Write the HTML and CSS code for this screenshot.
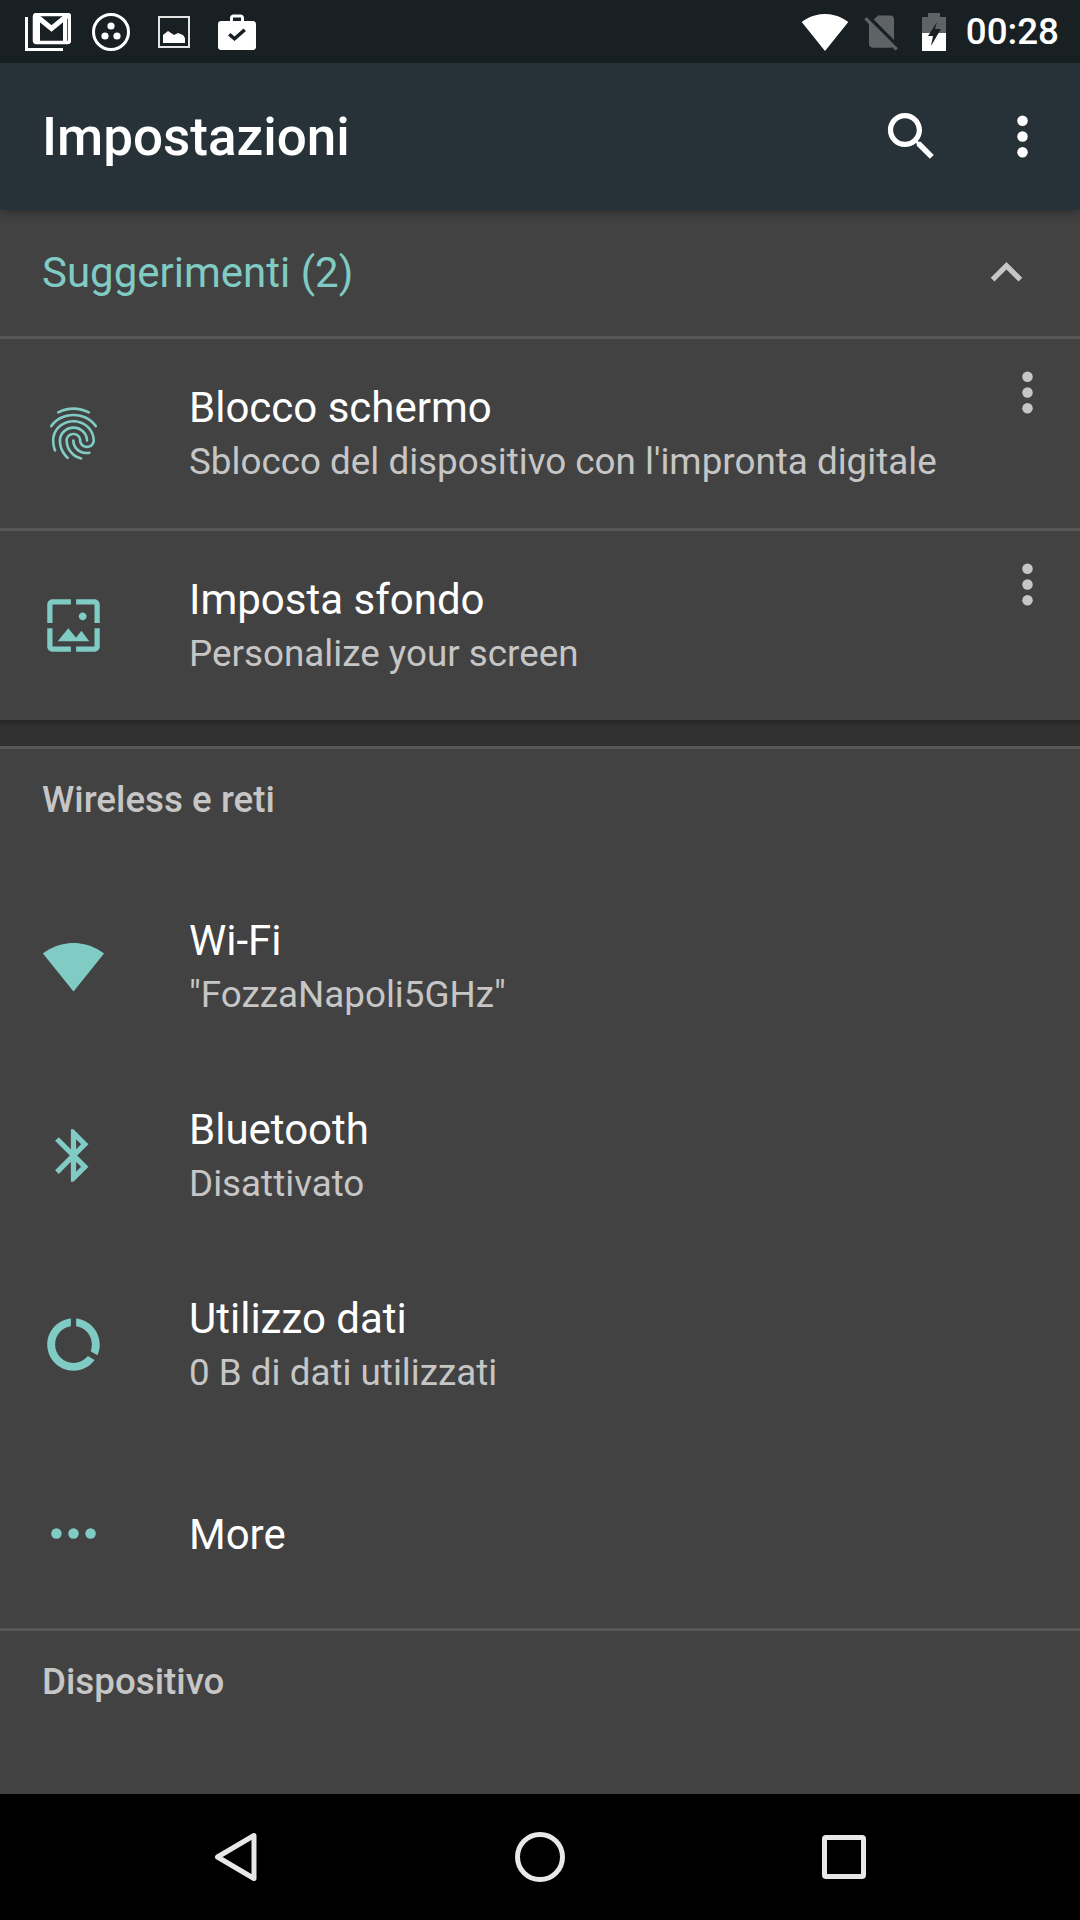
FILE: index.html
```html
<!DOCTYPE html>
<html lang="it">
<head>
    <meta charset="UTF-8">
    <meta name="viewport" content="width=device-width, initial-scale=1.0">
    <title>Impostazioni</title>
    <link rel="stylesheet" href="styles.css">
</head>
<body>

<div id="screen">
    <div class="status-bar">
        <div class="status-left">
            <span class="status-cell">
                <svg class="ico-gmail" viewBox="0 0 46 38">
                    <path class="line" d="M1.500 4v32.500H38" stroke-width="3"/>
                    <rect class="line" x="9.500" y="1.500" width="35" height="28" rx="2" stroke-width="3.500"/>
                    <path class="line" d="M10 2l16.500 13.500L43 2" stroke-width="5"/>
                    <path class="line" d="M13 4v24M40 4v24" stroke-width="4"/>
                </svg>
            </span>
            <span class="status-cell">
                <svg class="ico-circle" viewBox="0 0 38 38">
                    <circle class="line" cx="19" cy="19" r="17.500" stroke-width="3"/>
                    <circle class="solid" cx="19" cy="13" r="3.600"/>
                    <circle class="solid" cx="13" cy="23" r="3.600"/>
                    <circle class="solid" cx="25" cy="23" r="3.600"/>
                </svg>
            </span>
            <span class="status-cell">
                <svg class="ico-image" viewBox="0 0 32 32">
                    <rect class="line soft" x="1" y="1" width="30" height="30" stroke-width="2"/>
                    <path class="solid" d="M5 27v-8l5-4 6 4 4-2 5 2 2 3v5z"/>
                </svg>
            </span>
            <span class="status-cell">
                <svg class="ico-case" viewBox="0 0 38 36">
                    <path class="solid" fill-rule="evenodd" d="M12 7V4c0-2 1.500-3.500 3.500-3.500h7C24.500.5 26 2 26 4v3h9c1.700 0 3 1.300 3 3v23c0 1.700-1.300 3-3 3H3c-1.700 0-3-1.300-3-3V10c0-1.700 1.300-3 3-3zm3 0h8V3.500h-8zM16.500 27L28 17l-2.500-2.500-9 8-4-3.500-2.500 2.500z"/>
                </svg>
            </span>
        </div>
        <div class="status-right">
            <svg class="ico-wifi" viewBox="0 0 24 24">
                <path class="solid" d="M12.010 21.490L23.640 7c-.45-.34-4.930-4-11.640-4C5.280 3 .81 6.660.36 7l11.630 14.490.01.01.01-.01z"/>
            </svg>
            <svg class="ico-sim" viewBox="0 0 24 24">
                <path class="solid" d="M18.990 5c0-1.100-.89-2-1.990-2h-7L7.660 5.340 19 16.680 18.990 5zM3.650 3.880L2.380 5.150 5 7.770V19c0 1.100.9 2 2 2h10.010c.35 0 .67-.1.96-.26l1.880 1.880 1.270-1.270L3.650 3.880z"/>
            </svg>
            <svg class="ico-battery" viewBox="0 0 24 38">
                <path class="solid dim" d="M6 0h12v4h6v16h-7.400L19 16h-6l2-7-7.070 11H0V4h6z"/>
                <path class="solid" d="M0 20h7.930L6 23h5l-2 10 7.600-13H24v18H0z"/>
            </svg>
            <span class="clock">00:28</span>
        </div>
    </div>

    <div class="toolbar">
        <h1 class="toolbar-title">Impostazioni</h1>
        <div class="toolbar-actions">
            <svg class="icon" viewBox="0 0 24 24">
                <path class="solid" d="M15.500 14h-.79l-.28-.27C15.410 12.590 16 11.110 16 9.500 16 5.910 13.090 3 9.500 3S3 5.910 3 9.500 5.910 16 9.500 16c1.610 0 3.090-.59 4.230-1.570l.27.28v.79l5 4.990L20.490 19l-4.990-5zm-6 0C7.010 14 5 11.990 5 9.500S7.010 5 9.500 5 14 7.010 14 9.500 11.990 14 9.500 14z"/>
            </svg>
            <svg class="icon" viewBox="0 0 24 24">
                <circle class="solid" cx="12" cy="6" r="2"/>
                <circle class="solid" cx="12" cy="12" r="2"/>
                <circle class="solid" cx="12" cy="18" r="2"/>
            </svg>
        </div>
    </div>

    <div class="suggest-head">
        <span class="suggest-title">Suggerimenti (2)</span>
        <svg class="icon grey" viewBox="0 0 24 24">
            <path d="M12 8l-6 6 1.410 1.410L12 10.830l4.590 4.580L18 14z"/>
        </svg>
    </div>

    <div class="row row-suggest">
        <svg class="icon teal row-icon" viewBox="0 0 24 24">
            <path d="M17.810 4.470c-.08 0-.16-.02-.23-.06C15.660 3.420 14 3 12.010 3c-1.980 0-3.860.47-5.570 1.410-.24.13-.54.04-.68-.2-.13-.24-.04-.55.2-.68C7.820 2.520 9.860 2 12.010 2c2.130 0 3.990.47 6.030 1.520.25.13.34.43.21.67-.09.18-.26.28-.44.28zM3.500 9.720c-.1 0-.2-.03-.29-.09-.23-.16-.28-.47-.12-.7.99-1.400 2.250-2.500 3.750-3.270C9.980 4.040 14 4.030 17.150 5.650c1.500.77 2.760 1.860 3.750 3.250.16.22.11.54-.12.7-.23.16-.54.11-.7-.12-.9-1.260-2.040-2.250-3.390-2.940-2.870-1.470-6.540-1.470-9.400.01-1.360.7-2.500 1.700-3.400 2.960-.08.14-.23.21-.39.21zm6.250 12.070c-.13 0-.26-.05-.35-.15-.87-.87-1.340-1.430-2.010-2.640-.69-1.230-1.050-2.730-1.050-4.340 0-2.970 2.540-5.390 5.660-5.390s5.660 2.420 5.660 5.390c0 .28-.22.5-.5.5s-.5-.22-.5-.5c0-2.420-2.090-4.390-4.660-4.390-2.570 0-4.660 1.970-4.660 4.390 0 1.440.32 2.770.93 3.850.64 1.150 1.080 1.640 1.850 2.420.19.2.19.51 0 .71-.11.1-.24.15-.37.15zm7.170-1.850c-1.190 0-2.240-.3-3.100-.89-1.490-1.010-2.380-2.650-2.380-4.390 0-.28.22-.5.5-.5s.5.22.5.5c0 1.410.72 2.740 1.940 3.560.71.48 1.540.71 2.540.71.24 0 .64-.03 1.040-.1.27-.05.53.13.58.41.05.27-.13.53-.41.58-.57.11-1.070.12-1.210.12zM14.910 22c-.04 0-.09-.01-.13-.02-1.590-.44-2.630-1.030-3.720-2.100-1.400-1.390-2.170-3.240-2.170-5.220 0-1.620 1.380-2.940 3.080-2.940 1.700 0 3.080 1.320 3.080 2.940 0 1.070.93 1.940 2.080 1.940s2.080-.87 2.080-1.940c0-3.770-3.250-6.830-7.250-6.830-2.840 0-5.440 1.580-6.610 4.030-.39.81-.59 1.760-.59 2.800 0 .78.07 2.010.67 3.610.1.26-.03.55-.29.64-.26.1-.55-.04-.64-.29-.49-1.310-.73-2.610-.73-3.960 0-1.200.23-2.290.68-3.240 1.330-2.790 4.280-4.600 7.510-4.600 4.550 0 8.250 3.510 8.250 7.830 0 1.620-1.380 2.940-3.080 2.940s-3.080-1.320-3.080-2.940c0-1.070-.93-1.940-2.080-1.940s-2.080.87-2.080 1.940c0 1.710.66 3.310 1.870 4.510.95.94 1.860 1.460 3.270 1.850.27.07.42.35.35.61-.05.23-.26.38-.47.38z"/>
        </svg>
        <div class="row-text">
            <div class="row-title">Blocco schermo</div>
            <div class="row-sub">Sblocco del dispositivo con l'impronta digitale</div>
        </div>
        <svg class="icon grey row-more" viewBox="0 0 24 24">
            <circle cx="12" cy="6" r="2"/>
            <circle cx="12" cy="12" r="2"/>
            <circle cx="12" cy="18" r="2"/>
        </svg>
    </div>

    <div class="row row-suggest">
        <svg class="icon teal row-icon" viewBox="0 0 24 24">
            <path d="M4 4h7V2H4c-1.100 0-2 .9-2 2v7h2V4zm6 9l-4 5h12l-3-4-2.030 2.710L10 13zm7-4.500c0-.83-.67-1.500-1.500-1.500S14 7.670 14 8.500s.67 1.500 1.500 1.500S17 9.330 17 8.500zM20 2h-7v2h7v7h2V4c0-1.100-.9-2-2-2zm0 18h-7v2h7c1.100 0 2-.9 2-2v-7h-2v7zM4 13H2v7c0 1.100.9 2 2 2h7v-2H4v-7z"/>
        </svg>
        <div class="row-text">
            <div class="row-title">Imposta sfondo</div>
            <div class="row-sub">Personalize your screen</div>
        </div>
        <svg class="icon grey row-more" viewBox="0 0 24 24">
            <circle cx="12" cy="6" r="2"/>
            <circle cx="12" cy="12" r="2"/>
            <circle cx="12" cy="18" r="2"/>
        </svg>
    </div>

    <div class="gap-strip"></div>

    <div class="section">
        <div class="section-label">Wireless e reti</div>
    </div>

    <div class="row">
        <svg class="icon teal row-icon" viewBox="0 0 24 24">
            <path d="M12.010 21.490L23.640 7c-.45-.34-4.930-4-11.640-4C5.280 3 .81 6.660.36 7l11.630 14.490.01.01.01-.01z"/>
        </svg>
        <div class="row-text">
            <div class="row-title">Wi-Fi</div>
            <div class="row-sub">"FozzaNapoli5GHz"</div>
        </div>
    </div>

    <div class="row">
        <svg class="icon teal row-icon" viewBox="0 0 24 24">
            <path d="M17.710 7.710L12 2h-1v7.590L6.410 5 5 6.410 10.590 12 5 17.590 6.410 19 11 14.410V22h1l5.710-5.710-4.300-4.290 4.300-4.290zM13 5.830l1.880 1.880L13 9.590V5.830zm1.880 10.460L13 18.170v-3.760l1.880 1.880z"/>
        </svg>
        <div class="row-text">
            <div class="row-title">Bluetooth</div>
            <div class="row-sub">Disattivato</div>
        </div>
    </div>

    <div class="row">
        <svg class="icon teal row-icon" viewBox="0 0 24 24">
            <path d="M13 2.050v3.030c3.390.49 6 3.390 6 6.920 0 .9-.18 1.750-.48 2.540l2.600 1.530c.56-1.240.88-2.600.88-4.070 0-5.180-3.950-9.450-9-9.950zM12 19c-3.870 0-7-3.130-7-7 0-3.530 2.610-6.430 6-6.920V2.050c-5.060.5-9 4.760-9 9.950 0 5.520 4.470 10 9.990 10 3.310 0 6.240-1.610 8.060-4.090l-2.600-1.530C16.170 17.980 14.210 19 12 19z"/>
        </svg>
        <div class="row-text">
            <div class="row-title">Utilizzo dati</div>
            <div class="row-sub">0 B di dati utilizzati</div>
        </div>
    </div>

    <div class="row">
        <svg class="icon teal row-icon" viewBox="0 0 24 24">
            <circle cx="5.500" cy="12" r="2"/>
            <circle cx="12" cy="12" r="2"/>
            <circle cx="18.500" cy="12" r="2"/>
        </svg>
        <div class="row-text">
            <div class="row-title">More</div>
        </div>
    </div>

    <div class="section section-last">
        <div class="section-label">Dispositivo</div>
    </div>

    <div class="nav-bar">
        <span class="nav-cell">
            <svg class="nav-back" viewBox="0 0 44 50">
                <path class="nav-line" d="M40 3.500v43L3.500 25z"/>
            </svg>
        </span>
        <span class="nav-cell">
            <svg class="nav-home" viewBox="0 0 50 50">
                <circle class="nav-line" cx="25" cy="25" r="22.500"/>
            </svg>
        </span>
        <span class="nav-cell">
            <svg class="nav-recent" viewBox="0 0 44 44">
                <rect class="nav-line" x="2.500" y="2.500" width="39" height="39" rx="1.500"/>
            </svg>
        </span>
    </div>
</div>

</body>
</html>
```

FILE: styles.css
```css
* {
    box-sizing: border-box;
}

html, body {
    margin: 0;
    padding: 0;
}

body {
    font-family: 'Roboto', sans-serif;
    background-color: #424242;
}

#screen {
    width: 1080px;
    height: 1920px;
    display: flex;
    flex-direction: column;
    overflow: hidden;
    background-color: #424242;
}

/* svg helpers */
.solid {
    fill: #fff;
}

.solid.dim {
    fill-opacity: 0.3;
}

.line {
    fill: none;
    stroke: #fff;
}

.line.soft {
    stroke: #e4e4e4;
}

.icon {
    width: 63px;
    height: 63px;
    flex-shrink: 0;
}

.teal {
    fill: #80cbc4;
}

.grey {
    fill: #c6c6c6;
}

/* status bar */
.status-bar {
    height: 63px;
    flex-shrink: 0;
    display: flex;
    justify-content: space-between;
    align-items: center;
    padding: 0 21px 0 16px;
    background-color: #192024;
}

.status-left,
.status-right {
    display: flex;
    align-items: center;
}

.status-cell {
    width: 63px;
    display: flex;
    justify-content: center;
}

.ico-gmail {
    width: 46px;
    height: 38px;
}

.ico-circle {
    width: 38px;
    height: 38px;
}

.ico-image {
    width: 32px;
    height: 32px;
}

.ico-case {
    width: 38px;
    height: 36px;
}

.ico-wifi {
    width: 48px;
    height: 48px;
}

.ico-sim {
    width: 43px;
    height: 43px;
    margin-left: 11px;
    opacity: 0.3;
}

.ico-battery {
    width: 24px;
    height: 38px;
    margin-left: 19px;
}

.clock {
    margin-left: 20px;
    font-size: 36.75px;
    font-weight: 500;
    color: #fff;
}

/* toolbar */
.toolbar {
    height: 147px;
    flex-shrink: 0;
    display: flex;
    justify-content: space-between;
    align-items: center;
    padding: 0 26px 0 42px;
    background-color: #263238;
    box-shadow: 0 3px 10px rgba(0, 0, 0, 0.3);
    position: relative;
}

.toolbar-title {
    margin: 0;
    font-size: 53px;
    font-weight: 500;
    color: #fff;
}

.toolbar-actions {
    display: flex;
    gap: 48px;
}

/* suggestions */
.suggest-head {
    height: 126px;
    flex-shrink: 0;
    display: flex;
    justify-content: space-between;
    align-items: center;
    padding: 0 42px 2px 42px;
}

.suggest-title {
    font-size: 42px;
    color: #80cbc4;
}

.row {
    height: 189px;
    flex-shrink: 0;
    display: flex;
    align-items: center;
    padding-left: 42px;
    position: relative;
}

.row-suggest {
    height: 192px;
    border-top: 3px solid #575757;
}

.row-icon {
    margin-right: 84px;
}

.row-text {
    flex: 1;
    padding-top: 2px;
}

.row-title {
    font-size: 42px;
    line-height: 54px;
    color: #fff;
}

.row-sub {
    font-size: 36.8px;
    line-height: 54px;
    color: #c6c6c6;
}

.row-more {
    position: absolute;
    top: 22px;
    right: 21px;
}

.gap-strip {
    height: 26px;
    flex-shrink: 0;
    background-color: #303030;
    box-shadow: inset 0 5px 5px -3px rgba(0, 0, 0, 0.25);
}

/* sections */
.section {
    height: 126px;
    flex-shrink: 0;
    padding: 30px 0 0 42px;
    border-top: 3px solid #575757;
}

.section-last {
    height: 166px;
}

.section-label {
    font-size: 36.75px;
    line-height: 42px;
    font-weight: 500;
    color: #c6c6c6;
}

/* nav bar */
.nav-bar {
    flex: 1;
    display: flex;
    justify-content: center;
    align-items: center;
    background-color: #000;
}

.nav-cell {
    width: 304px;
    display: flex;
    justify-content: center;
}

.nav-line {
    fill: none;
    stroke: #e8e8e8;
    stroke-width: 5;
    stroke-linejoin: round;
}

.nav-back {
    width: 44px;
    height: 50px;
}

.nav-home {
    width: 50px;
    height: 50px;
}

.nav-recent {
    width: 44px;
    height: 44px;
}
```
